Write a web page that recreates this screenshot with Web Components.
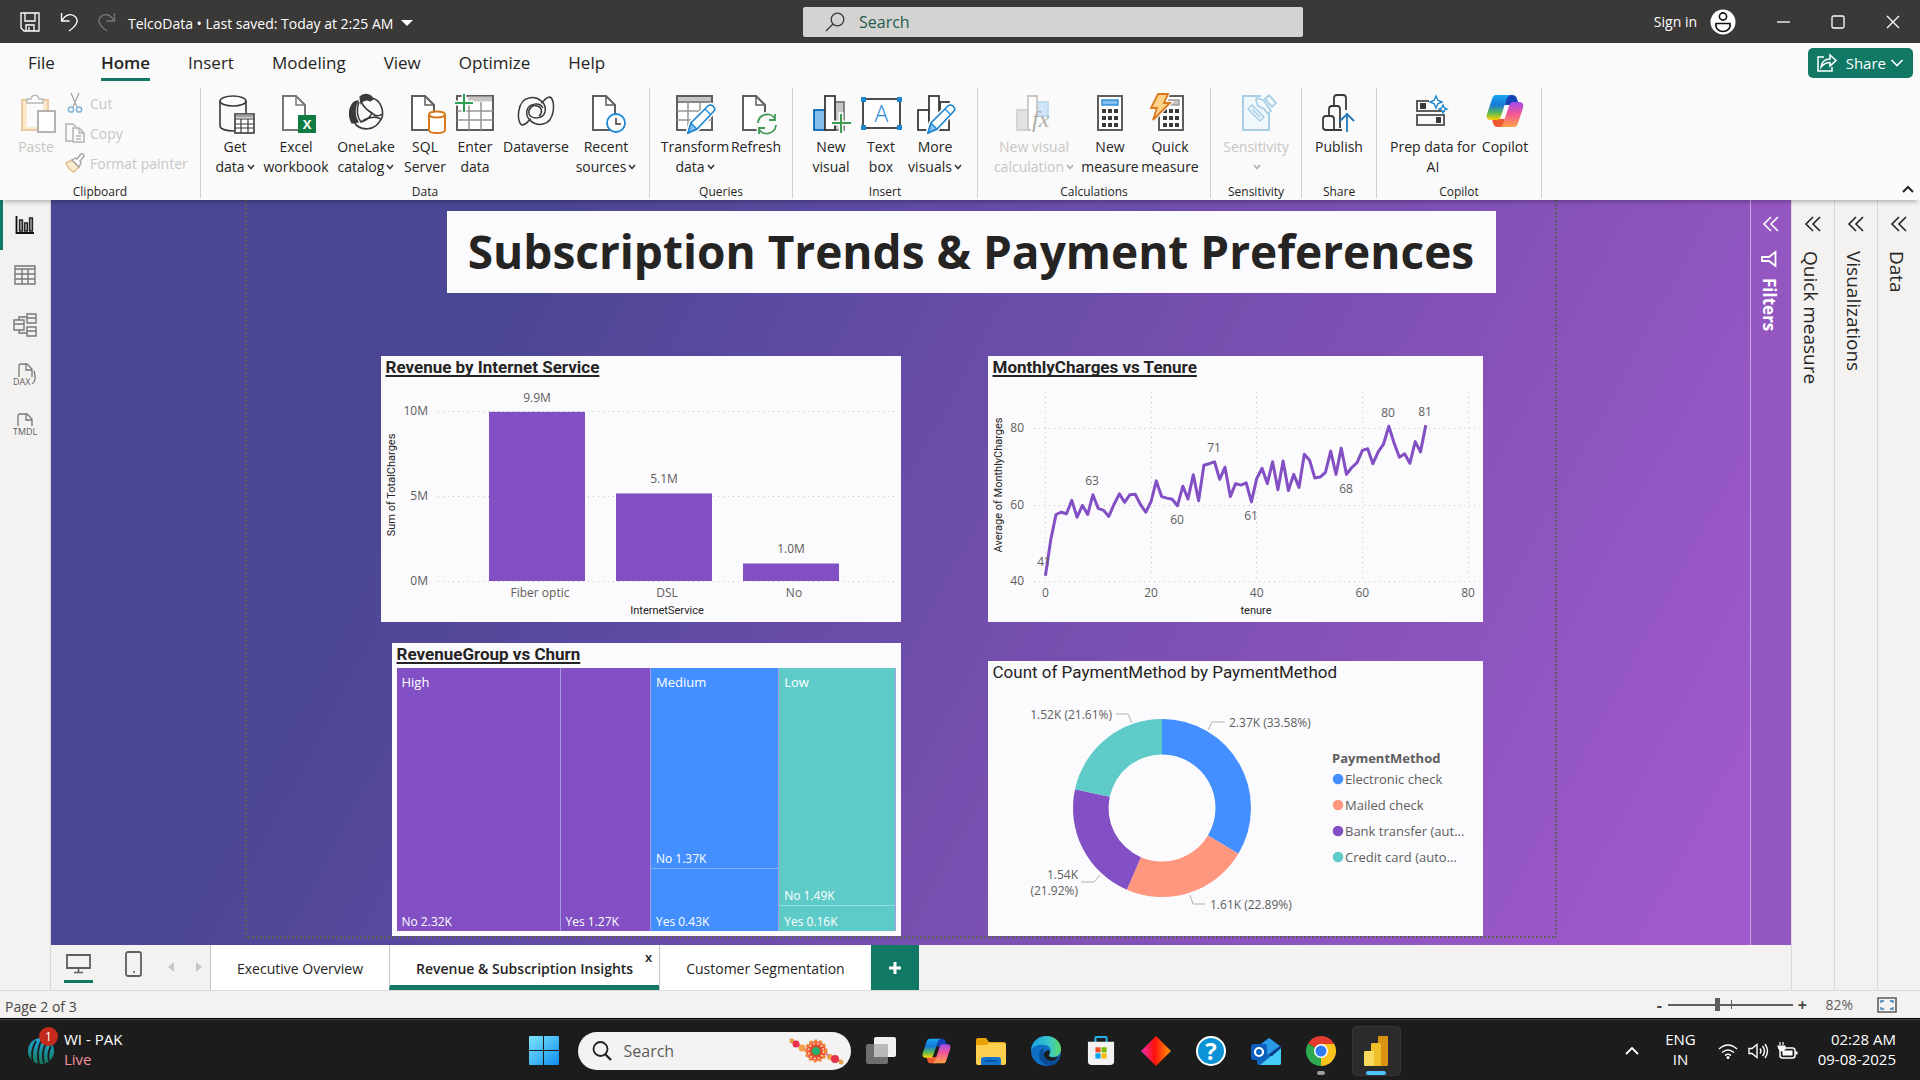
<!DOCTYPE html>
<html lang="en">
<head>
<meta charset="utf-8">
<title>TelcoData - Power BI Desktop</title>
<style>
  html, body { margin: 0; height: 100%; }
  body { font-family: "Open Sans", sans-serif; color: #252423; background: #f3f2f1; }
</style>
</head>
<body>
<pbi-app></pbi-app>

<script>
/* ---------- icon set: name -> [width, height, markup] ---------- */
const K = '#3b3a39';
const doc = (c = '#605e5c') => `<path d="M8 2H21L30 11V36H8Z" fill="#fff" stroke="${c}" stroke-width="2"/><path d="M21 2v9h9" stroke="${c}" stroke-width="1.500"/>`;
const pencil = `<path d="M14 39l3-10L34 12q2-2 5 0q3 3 1 5L23 35Z" fill="#fff" stroke="#fafafa" stroke-width="5"/><path d="M14 39l3-10L34 12q2-2 5 0q3 3 1 5L23 35Z" fill="#fff" stroke="#1f86d1" stroke-width="1.600"/><path d="M14 39l3-10 6 6Z" fill="#83beec" stroke="#1f86d1" stroke-width="1.400"/><path d="M31 15l6 6" stroke="#1f86d1"/>`;
const copilot = `<defs>
 <linearGradient id="a" x1="0" y1="0" x2="0" y2="1"><stop offset="0" stop-color="#1aa5f0"/><stop offset=".4" stop-color="#1679d8"/><stop offset=".7" stop-color="#57b85a"/><stop offset="1" stop-color="#ffd200"/></linearGradient>
 <linearGradient id="b" x1="0" y1="1" x2="0" y2="0"><stop offset="0" stop-color="#a04be8"/><stop offset=".45" stop-color="#f0559a"/><stop offset="1" stop-color="#ffa243"/></linearGradient></defs>
 <g stroke="none"><path d="M20 1h6c3 0 4 1 5 4l2 6h-14z" fill="#1442b8"/><path d="M18 33h-6c-3 0-4-1-5-4l-1-4h13z" fill="#ef5a33"/>
 <path d="M10 1h14c-2 1-3 3-4 6l-5 15c-1 3-2 4-5 4H5c-4 0-5-3-4-6L6 5c1-3 2-4 4-4z" fill="url(#a)"/>
 <path d="M10 1h14c-2 1-3 3-4 6l-5 15c-1 3-2 4-5 4H5c-4 0-5-3-4-6L6 5c1-3 2-4 4-4z" fill="url(#b)" transform="rotate(180 19 17)"/></g>`;
const calc = x => `<rect x="${x}" y="2" width="24" height="34" fill="#fff" stroke="#605e5c" stroke-width="2"/>` +
  [0,1,2].map(r => [0,1,2].map(c => `<rect x="${x+4+c*6}" y="${15+r*7}" width="4" height="4" fill="${K}" stroke="none"/>`).join('')).join('');

const ICONS = {
 save: [20,20,`<path d="M1 1h18v18H4l-3-3z"/><path d="M5 1v8h10V1M6 19v-6h8v6M9 15v4"/>`],
 undo: [18,20,`<path d="M1.500 1v8h8M2 9C5 2 12 1 15.500 5S17 13 9 19"/>`],
 redo: [18,20,`<path d="M16.500 1v8h-8M16 9C13 2 6 1 2.500 5S1 13 9 19"/>`],
 tri: [12,7,`<path d="M0 0h12L6 6z" fill="currentColor" stroke="none"/>`],
 mag: [20,20,`<circle cx="12.500" cy="7.500" r="6.300"/><path d="M8 12l-7 7"/>`],
 user: [26,26,`<circle cx="13" cy="13" r="12.500" fill="#fff" stroke="none"/><circle cx="13" cy="7.500" r="3.600" stroke="#111" stroke-width="1.600"/><path d="M6 14.500h14c1 5-3 8-7 8s-8-3-7-8z" stroke="#111" stroke-width="1.600"/>`],
 min: [14,14,`<path d="M1 7h13"/>`],
 max: [14,14,`<rect x="1" y="1" width="12" height="12" rx="1.500"/>`],
 close: [14,14,`<path d="M1 1l12 12M13 1L1 13"/>`],
 share: [20,20,`<path d="M7 4H1v14h14v-4" stroke-width="1.500"/><path d="M4 14c1-6 5-8 9-8V2l6 5.500-6 5.500V9.500c-4 0-6 1-9 4.500z" stroke-width="1.500"/>`],
 chev: [14,8,`<path d="M1.500 1L7 6.500 12.500 1" stroke-width="1.600"/>`],
 up: [12,8,`<path d="M1 7l5-5 5 5" stroke-width="2"/>`],
 caret: [8,6,`<path d="M1 1l3 3.500L7 1" stroke-width="1.600"/>`],
 paste: [40,40,`<path d="M6 6h26v30H6z" fill="#fbeacb" stroke="#ecc9a0" stroke-width="2"/><path d="M11 8h16v25H11z" fill="#fbfbfb" stroke="none"/><path d="M11 9V5h4c1-5 7-5 8 0h4v4z" fill="#fff" stroke="#bdbbb9" stroke-width="1.500"/><path d="M22 17h17v21H22z" fill="#fff" stroke="#b5b3b1" stroke-width="2"/>`],
 cut: [20,20,`<path d="M6 0l6 14M14 0L8 14" stroke="#a8a6a4"/><circle cx="6" cy="16.500" r="2.600" stroke="#7fb5d8" stroke-width="1.500"/><circle cx="14" cy="16.500" r="2.600" stroke="#7fb5d8" stroke-width="1.500"/>`],
 copy: [20,20,`<path d="M8 18H1V1h7l3 3M8 5h6l5 5v9H8z" stroke="#b5b3b1" stroke-width="1.500"/><path d="M14 5v5h5M11 13h5M11 16h5" stroke="#b5b3b1"/>`],
 brush: [20,20,`<path d="M1 10l6-3 7 7-5 5c-3-1-6-4-8-9z" fill="#fbeacb" stroke="#e5bd92" stroke-width="1.500"/><path d="M7 7l3-2 2 1 4-5q3-1 3 2l-4 5 1 2-2 4z" fill="#fff" stroke="#a8a6a4" stroke-width="1.500"/>`],
 getdata: [42,40,`<path d="M6 7v25c0 3 6 5 14 5M32 7v12" stroke="${K}" stroke-width="1.600"/><ellipse cx="19" cy="7" rx="13" ry="5" fill="#fff" stroke="${K}" stroke-width="1.600"/><rect x="21" y="20" width="19" height="19" fill="#fff" stroke="${K}" stroke-width="1.600"/><path d="M22 22h17" stroke="#a19f9d" stroke-width="3"/><path d="M21 25h19M21 30h19M21 34h19M27 25v14M34 25v14" stroke="${K}" stroke-width="1.200"/>`],
 excel: [42,40,doc('#797775')+`<rect x="23" y="21" width="18" height="18" fill="#107c41" stroke="none"/><text x="32" y="35" font-size="13" font-weight="700" text-anchor="middle" fill="#fff" stroke="none">X</text>`],
 onelake: [36,38,`<path d="M12 3c4-4 11-3 13 2l-3 2c-3-2-7-1-9 2z" fill="${K}" stroke="${K}"/><path d="M10 7C2 8-1 20 4 29l6-1C6 22 6 13 10 7z" fill="${K}" stroke="${K}"/><path d="M24 4c9 2 13 14 9 22M11 8c-3 7-2 15 2 20 5-1 9-5 11-9C20 17 16 13 13 8M24 19c3 4 8 3 10 1M6 28c6 10 22 9 27-3-5-3-14-2-20 3" stroke="${K}" stroke-width="1.600"/>`],
 sql: [42,40,doc()+`<path d="M25 21v15c0 2 4 3 8 3s8-1 8-3V21" fill="#fff" stroke="#d8791d" stroke-width="2"/><ellipse cx="33" cy="20.500" rx="8" ry="3" fill="#fff" stroke="#d8791d" stroke-width="2"/>`],
 enter: [42,40,`<rect x="3" y="2" width="36" height="34" fill="#fff" stroke="#605e5c" stroke-width="2"/><path d="M14 5h24" stroke="#c8c6c4" stroke-width="5"/><path d="M3 17h36M3 26h36M15 8v28M27 8v28" stroke="#979593" stroke-width="1.500"/><path d="M10-2v22M0 9h20" stroke="#fafafa" stroke-width="5"/><path d="M10 0v18M1 9h18" stroke="#2fa04e" stroke-width="2"/>`],
 dataverse: [38,34,`<path d="M5 31C-1 28 0 6 12 4c9-2 18 5 16 14-2 7-13 8-16 2-1-5 3-10 8-8 5 1 6 7 2 10M33 3c6 3 5 25-7 27C17 32 8 25 10 16c2-7 13-8 16-2M5 31c5 0 6-5 9-6M33 3c-5 0-6 5-9 6" stroke="${K}" stroke-width="1.500"/>`],
 recent: [42,40,doc()+`<circle cx="31" cy="29" r="9" fill="#fff" stroke="#1f86d1" stroke-width="1.800"/><path d="M31 24v6h5" stroke="${K}" stroke-width="1.500"/>`],
 transform: [42,40,`<path d="M3 2h35v34H3z" fill="#fff" stroke="#605e5c" stroke-width="2"/><path d="M4 5h33" stroke="#c8c6c4" stroke-width="4"/><path d="M3 8h35" stroke="#605e5c"/><path d="M3 17h35M3 26h35M14 8v28M26 8v28" stroke="#979593" stroke-width="1.500"/>`+pencil],
 refresh: [42,40,doc()+`<circle cx="32" cy="30" r="12" fill="#fafafa" stroke="none"/><path d="M23 29c1-10 14-11 17-4M40 20v6h-6M41 31c-1 10-14 11-17 4M24 40v-6h6" stroke="#3f9b56" stroke-width="1.800"/>`],
 newvisual: [42,40,`<rect x="25" y="8" width="9" height="28" fill="#c8c6c4" stroke="#797775" stroke-width="1.800"/><rect x="4" y="16" width="11" height="20" fill="#83beec" stroke="#1267b0" stroke-width="1.800"/><rect x="15" y="2" width="10" height="34" fill="#fff" stroke="${K}" stroke-width="1.800"/><path d="M31 18v22M21 29h20" stroke="#fafafa" stroke-width="5"/><path d="M31 20v19M22 29h19" stroke="#3f9b56" stroke-width="2"/>`],
 textbox: [42,40,`<rect x="3" y="5" width="37" height="29" fill="#fff" stroke="${K}" stroke-width="1.800"/><path d="M1 3h5v5H1zM37 3h5v5h-5zM1 31h5v5H1zM37 31h5v5h-5z" fill="#1f86d1" stroke="none"/><text x="21.500" y="28" font-size="23" text-anchor="middle" fill="#1f86d1" stroke="none" font-weight="300">A</text>`],
 morevisual: [42,40,`<rect x="26" y="8" width="9" height="28" fill="#fff" stroke="${K}" stroke-width="1.800"/><rect x="4" y="16" width="11" height="20" fill="#fff" stroke="${K}" stroke-width="1.800"/><rect x="15" y="2" width="10" height="34" fill="#fff" stroke="${K}" stroke-width="1.800"/>`+pencil],
 visualcalc: [42,40,`<rect x="23" y="8" width="12" height="14" fill="#cfe4f6" stroke="#b9d9f0" stroke-width="1.800"/><rect x="4" y="16" width="11" height="20" fill="#e3e1df" stroke="#d2d0ce" stroke-width="1.800"/><path d="M15 36V2h9v18L18 36z" fill="#fff" stroke="none"/><path d="M24 18V2H15v34h3" stroke="#c8c6c4" stroke-width="1.800"/><text x="19" y="33" font-size="24" font-style="italic" fill="#b0aeac" stroke="none" font-family="Liberation Serif">fx</text>`],
 measure: [42,40,calc(9)+`<rect x="13" y="6" width="16" height="5" fill="#83beec" stroke="#1f86d1"/>`],
 quick: [42,40,calc(10)+`<rect x="20" y="6" width="10" height="5" fill="#c8c6c4" stroke="#979593"/><path d="M9 0h10l-4 9h6L4 26l4-12H2z" fill="#fdd28a" stroke="#fafafa" stroke-width="4"/><path d="M9 0h10l-4 9h6L4 26l4-12H2z" fill="#fdd28a" stroke="#d8791d" stroke-width="1.800"/>`],
 sensitivity: [42,40,`<path d="M26 2H8v34h26V20" fill="#f1f8fc" stroke="#a9cfe6" stroke-width="2"/><path d="M13 15l4-4 12 12-4 4zM17 15l8 8" stroke="#a9cfe6" stroke-width="1.500"/><path d="M22 4l6 2 4 5 4 6-3 3-4-5-6-3-2-6zM30 5l4-4 7 8-4 4z" fill="#f1f8fc" stroke="#a9cfe6" stroke-width="1.800"/>`],
 publish: [42,40,`<path d="M28 16V4q0-3-3-3h-6q-3 0-3 3v8M22 34V15q0-3-3-3h-5q-3 0-3 3v7M16 36V25q0-3-3-3H8q-3 0-3 3v8q0 3 3 3h16" stroke="${K}" stroke-width="1.800"/><path d="M29 38V19M22 27l7-7 7 7" stroke="#1f76b8" stroke-width="1.800"/>`],
 prep: [42,40,`<path d="M17 7H5v10h27v-3" stroke="#605e5c" stroke-width="2"/><rect x="5" y="21" width="27" height="10" stroke="#605e5c" stroke-width="2"/><path d="M8 9h6v6H8zM24 23h5v6h-5z" fill="${K}" stroke="none"/><path d="M24 2l1.800 4.200L30 8l-4.200 1.800L24 14l-1.800-4.200L18 8l4.200-1.800zM31 11l1.200 2.800L35 15l-2.800 1.200L31 19l-1.200-2.800L27 15l2.800-1.200z" fill="#fff" stroke="#1f86d1" stroke-width="1.400"/>`],
 copilot: [38,34,copilot],
 report: [20,20,`<path d="M1.500 1v17H19" stroke="#111" stroke-width="1.800"/><path d="M4.500 5h3v11h-3zM9.500 8h3v8h-3zM14.500 3h3v13h-3z" fill="#979593" stroke="#252423" stroke-width="1.300"/>`],
 table: [22,20,`<path d="M1 1h20v18H1zM1 4h20M1 9h20M1 14h20M8 4v15M14 4v15" stroke="#797775" stroke-width="1.400"/>`],
 model: [24,24,`<path d="M1 7h10v10H1zM14 1h9v9h-9zM14 14h9v9h-9zM1 11h10M14 5h9M14 18h9M6 7V4h8M6 17v3h8" stroke="#797775" stroke-width="1.400"/>`],
 dax: [24,24,`<path d="M6 14V3q0-2 2-2h6l5 5v8M13 1v6h6M21 8q3 10-2 13" stroke="#797775" stroke-width="1.300"/><text x="0" y="22" font-size="9" fill="#605e5c" stroke="none">DAX</text>`],
 tmdl: [24,24,`<path d="M5 13V3q0-2 2-2h7l5 5v7M13 1v6h6" stroke="#797775" stroke-width="1.300"/><text x="0" y="22" font-size="9" fill="#605e5c" stroke="none">TMDL</text>`],
 collapse: [16,16,`<path d="M8 1L1 8l7 7M15 1L8 8l7 7" stroke-width="1.600"/>`],
 funnel: [16,16,`<path d="M14.500 1v14L8 10H1V6h7z" stroke-width="1.800"/>`],
 desktop: [25,20,`<path d="M1 1h23v13H1z" stroke="#605e5c" stroke-width="1.800"/><path d="M12.500 14v4M8 18.500h9" stroke="#605e5c" stroke-width="1.600"/>`],
 phone: [17,26,`<rect x="1" y="1" width="15" height="24" rx="2" stroke="#605e5c" stroke-width="1.800"/><path d="M8 21h2" stroke="#605e5c" stroke-width="1.500"/>`],
 left: [6,10,`<path d="M6 0v10L0 5z" fill="#c8c6c4" stroke="none"/>`],
 right: [6,10,`<path d="M0 0v10l6-5z" fill="#c8c6c4" stroke="none"/>`],
 plus: [14,14,`<path d="M7 1v12M1 7h12" stroke-width="3"/>`],
 fit: [20,16,`<path d="M1 1h18v14H1z" stroke="#605e5c" stroke-width="1.600"/><path d="M4 6V4h3M13 4h3v2M16 10v2h-3M7 12H4v-2" stroke="#2d7fb8" stroke-width="1.300"/>`],
 cricket: [30,36,`<defs><linearGradient id="c" x1="0" y1="0" x2="0" y2="1"><stop offset="0" stop-color="#1ba8dc"/><stop offset="1" stop-color="#17785c"/></linearGradient></defs><circle cx="14" cy="20" r="13" fill="url(#c)" stroke="none"/><path d="M9 10q-6 10-3 21M14 10q-5 12-2 23M19 12q-5 10-2 20M24 15q-4 8-2 15" stroke="#1c1c1c" stroke-width="1.800"/>`],
 start: [30,30,`<defs><linearGradient id="w" x1="0" y1="0" x2="1" y2="1"><stop offset="0" stop-color="#7de6fb"/><stop offset="1" stop-color="#0f8df2"/></linearGradient></defs><path d="M0 1q0-1 1-1h13v14H0zM15 0h14q1 0 1 1v13H15zM0 15h14v14H1q-1 0-1-1zM15 15h15v13q0 1-1 1H15z" fill="url(#w)" stroke="none"/>`],
 mag2: [20,20,`<circle cx="8.500" cy="8" r="7" stroke-width="1.800"/><path d="M13 13l6 6" stroke-width="2.400"/>`],
 rakhi: [56,28,`<path d="M2 2L18 13M38 17l16 8" stroke="#b06bd0" stroke-width="2"/><g stroke="none"><circle cx="4" cy="4" r="2.500" fill="#e2a24a"/><circle cx="8" cy="7" r="3.500" fill="#e8324b"/><circle cx="14" cy="11" r="3.500" fill="#f2a24c"/><circle cx="42" cy="20" r="3" fill="#f2a24c"/><circle cx="47" cy="22" r="4" fill="#e8324b"/><circle cx="53" cy="25" r="2.500" fill="#e2a24a"/></g><circle cx="28" cy="14" r="10" fill="#ee4a3c" stroke="#f08a3a" stroke-width="3" stroke-dasharray="3 2"/><circle cx="28" cy="14" r="7.500" stroke="#fbdca0" stroke-width="1.600" stroke-dasharray="2 2"/><circle cx="28" cy="14" r="4.500" fill="#21b573" stroke="#b8571e"/>`],
 taskview: [30,30,`<rect x="0" y="8" width="22" height="20" rx="2" fill="#6e6e6e" stroke="none"/><rect x="8" y="1" width="22" height="20" rx="2" fill="#f0f0f0" stroke="none"/><path d="M8 8h14v13H8z" fill="#b9b9b9" stroke="none"/>`],
 explorer: [30,28,`<path d="M0 3q0-2 2-2h8l3 4h15q2 0 2 2v6H0z" fill="#e6a207" stroke="none"/><path d="M0 9q0-1 1-1h10l2-2h15q2 0 2 2v18q0 2-2 2H2q-2 0-2-2z" fill="#ffd04f" stroke="none"/><path d="M5 28v-5q0-3 3-3h14q3 0 3 3v5z" fill="#1273cf" stroke="none"/><path d="M9 24h12" stroke="#0a4a92" stroke-width="1.500"/>`],
 edge: [30,30,`<defs><linearGradient id="e" x1="0" y1=".3" x2="1" y2=".3"><stop offset="0" stop-color="#1b9de2"/><stop offset=".6" stop-color="#36c6c9"/><stop offset="1" stop-color="#5fd968"/></linearGradient></defs><circle cx="15" cy="15" r="15" fill="#0f6fc6" stroke="none"/><path d="M0 14C1 5 8 0 15 0c9 0 15 6 15 13 0 5-4 8-8 8-5 0-5-2-3-4 2-4-1-8-6-8C7 8 2 11 0 14z" fill="url(#e)" stroke="none"/><path d="M19 17q-3 4 3 4.500 4 0 6-1.500-2 4-6 5-7 1-9-4-1-4 2-6 4-2 4 2z" fill="#1c1c1c" stroke="none"/><path d="M13 12C6 14 6 26 17 29.800 26 30 29 23 29 21 22 28 10 25 13 12z" fill="#0b4d97" stroke="none"/>`],
 store: [30,32,`<path d="M9 7V2q0-1 1-1h10q1 0 1 1v5" stroke="#29aee6" stroke-width="2.200"/><path d="M1 6h28v21q0 4-4 4H5q-4 0-4-4z" fill="#f2f2f2" stroke="none"/><path d="M9 12h5.500v5.500H9z" fill="#f25022" stroke="none"/><path d="M15.500 12H21v5.500h-5.500z" fill="#7fba00" stroke="none"/><path d="M9 18.500h5.500V24H9z" fill="#00a4ef" stroke="none"/><path d="M15.500 18.500H21V24h-5.500z" fill="#ffb900" stroke="none"/>`],
 diamond: [30,30,`<defs><linearGradient id="d"><stop offset="0" stop-color="#f02fb0"/><stop offset=".45" stop-color="#ff1010"/><stop offset="1" stop-color="#ff9a00"/></linearGradient></defs><path d="M15 0l15 15-15 15L0 15z" fill="url(#d)" stroke="none"/>`],
 help: [30,30,`<circle cx="15" cy="15" r="14" fill="#0b93d6" stroke="#fff" stroke-width="2"/><text x="15" y="24" font-size="24" font-weight="700" text-anchor="middle" fill="#fff" stroke="none">?</text>`],
 outlook: [30,28,`<path d="M6 10L18 1l12 9v16q0 2-2 2H8q-2 0-2-2z" fill="#1065c0" stroke="none"/><path d="M10 7l8-6 11 8-12 9z" fill="#2a9be8" stroke="none"/><path d="M30 11v15q0 2-2 2H9z" fill="#45cbfa" stroke="none"/><path d="M17 18L29 9l1 2-9 8z" fill="#0b3d86" stroke="none"/><rect x="0" y="7" width="16" height="16" rx="2" fill="#0d5fbd" stroke="none"/><circle cx="8" cy="15" r="4" stroke="#fff" stroke-width="2.200"/>`],
 chrome: [30,30,`<path d="M15 15L2 7.500A15 15 0 0 1 28 7.500z" fill="#e33b2e" stroke="none"/><path d="M15 15L28 7.500A15 15 0 0 1 15 30z" fill="#fcc31e" stroke="none"/><path d="M15 15V30A15 15 0 0 1 2 7.500z" fill="#2da94f" stroke="none"/><path d="M15 8h13.300L22 19 15 30l6-11z" fill="#fcc31e" stroke="none"/><circle cx="15" cy="15" r="7" fill="#fff" stroke="none"/><circle cx="15" cy="15" r="5.500" fill="#2f7cf0" stroke="none"/>`],
 pbi: [24,30,`<rect x="14" y="0" width="10" height="30" rx="1" fill="#d9930f" stroke="none"/><rect x="7" y="7" width="10" height="23" rx="1" fill="#edbf2b" stroke="none"/><rect x="0" y="15" width="10" height="15" rx="1" fill="#f7d95e" stroke="none"/>`],
 trayup: [14,9,`<path d="M1 8l6-6 6 6" stroke-width="1.800"/>`],
 wifi: [20,16,`<path d="M1 6q9-8 18 0M4 9.500q6-5 12 0M7 12.500q3-2.500 6 0" stroke-width="1.600"/><circle cx="10" cy="14.500" r="1.500" fill="currentColor" stroke="none"/>`],
 sound: [20,16,`<path d="M1 5.500h3L9 1.500v13l-5-4H1zM12 5.500q2 2.500 0 5M14.500 3q4 5 0 10M17 1q5 7 0 14" stroke-width="1.400"/>`],
 battery: [21,18,`<rect x="2" y="6" width="15" height="10" rx="2.500" stroke-width="1.500"/><rect x="4.500" y="8.500" width="10" height="5" fill="currentColor" stroke="none"/><path d="M18.500 9.500v3" stroke-width="2"/><path d="M2 0v3M5 0v3M0 4h7v3q-3 4-6 0z" fill="currentColor" stroke-width="1.200"/>`]
};

/* Registers a custom element whose shadow root is cloned from a template. */
function define(tag, html, setup) {
  const t = document.createElement('template');
  t.innerHTML = html;
  customElements.define(tag, class extends HTMLElement {
    constructor() { super(); this.attachShadow({ mode: 'open' }).append(t.content.cloneNode(true)); }
    connectedCallback() { if (setup && !this.ready) { this.ready = true; setup.call(this, this.shadowRoot); } }
  });
}
const reset = `:host,*{box-sizing:border-box} button,input{font:inherit;color:inherit;background:none;border:0;margin:0;padding:0} button{display:flex;align-items:center;justify-content:center}`;

define('x-icon', `<style>:host{display:inline-flex;flex:none} svg{display:block;overflow:visible;font-family:"Open Sans",sans-serif}</style>`, function (root) {
  const [w, h, body] = ICONS[this.getAttribute('name')];
  const size = this.getAttribute('size') || w;
  const box = document.createElement('div');
  box.innerHTML = `<svg width="${size}" height="${Math.round(h * size / w)}" viewBox="0 0 ${w} ${h}" fill="none" stroke="currentColor" stroke-width="1.300" aria-hidden="true">${body}</svg>`;
  root.append(box);
});

/* ---------- title bar ---------- */
define('title-bar', `<style>${reset}
 :host{display:grid;grid-template-columns:803fr 500px 617fr;align-items:center;height:43px;background:#3b3937;color:#fff;font-size:14px}
 .l,.r{display:flex;align-items:center}
 .l{padding-left:20px;gap:20px} .off{color:#7a7876}
 .name{gap:8px;margin-left:-8px;padding-top:4px}
 label{display:flex;align-items:center;gap:14px;height:30px;padding-left:22px;background:#d4d3d1;border-radius:2px;color:#3b3a39}
 input{flex:1;font-size:16px;outline:0} input::placeholder{color:#1f5c50;opacity:1}
 .r{justify-content:flex-end;padding-right:20px;gap:41px} .sign{gap:13px;margin-right:-1px}
</style>
<div class="l"><button aria-label="Save"><x-icon name="save"></x-icon></button><button aria-label="Undo"><x-icon name="undo"></x-icon></button><button class="off" aria-label="Redo"><x-icon name="redo"></x-icon></button>
<button class="name">TelcoData • Last saved: Today at 2:25 AM<x-icon name="tri"></x-icon></button></div>
<label aria-label="Search"><x-icon name="mag"></x-icon><input type="text" placeholder="Search"></label>
<div class="r"><button class="sign">Sign in<x-icon name="user"></x-icon></button><button aria-label="Minimize"><x-icon name="min"></x-icon></button><button aria-label="Maximize"><x-icon name="max"></x-icon></button><button aria-label="Close"><x-icon name="close"></x-icon></button></div>`);

/* ---------- ribbon ---------- */
define('ribbon-tabs', `<style>${reset}
 :host{display:flex;align-items:flex-start;height:40px;background:#fafafa;padding:5px 7px 0 28px}
 nav{display:flex;gap:38px;font-size:17px}
 nav button{height:33px;line-height:30px;border-bottom:3px solid transparent}
 nav button:first-child{margin-right:8px}
 nav .on{font-weight:600;border-color:#117865}
 .share{margin-left:auto;height:30px;padding:0 9px;gap:9px;border-radius:5px;background:#117865;color:#fff;font-size:15px}
 .share x-icon:last-child{margin-left:-5px}
</style>
<nav><button>File</button><button class="on">Home</button><button>Insert</button><button>Modeling</button><button>View</button><button>Optimize</button><button>Help</button></nav>
<button class="share"><x-icon name="share"></x-icon>Share<x-icon name="chev"></x-icon></button>`);

define('ribbon-group', `<style>:host{display:flex;flex-direction:column;border-right:1px solid #d2d0ce;height:110px;box-sizing:border-box;padding:0 var(--pad,10px)}
 .items{display:flex;flex:1} .cap{font-size:12px;line-height:12px;text-align:center}</style>
<div class="items"><slot></slot></div><div class="cap"></div>`, function (root) { root.querySelector('.cap').textContent = this.getAttribute('label'); });

const WIDTHS = { xs: 48, s: 52, m: 60, l: 70, xl: 92 };
define('ribbon-button', `<style>${reset}
 :host{display:block;font-size:14px} :host([off]){color:#c8c6c4}
 button{width:100%;flex-direction:column;justify-content:flex-start;padding-top:6px}
 .pic{height:43px;display:flex;align-items:flex-start;justify-content:center}
 .txt{line-height:20px;white-space:nowrap;text-align:center} .c{color:#3b3a39;vertical-align:2px;margin-left:2px} :host([off]) .c{color:#b0aeac}
</style><button><span class="pic"></span><span class="txt"><slot></slot></span></button>`, function (root) {
  this.style.width = WIDTHS[this.getAttribute('size')] + 'px';
  root.querySelector('.pic').innerHTML = `<x-icon name="${this.getAttribute('icon')}"></x-icon>`;
  if (this.hasAttribute('caret')) root.querySelector('.txt').insertAdjacentHTML('beforeend', '<x-icon class="c" name="caret"></x-icon>');
  if (this.hasAttribute('off')) root.querySelector('button').disabled = true;
});

define('clip-list', `<style>${reset}
 :host{display:flex;flex-direction:column;gap:10px;padding:5px 0 0 3px;font-size:14px;color:#c8c6c4} button{justify-content:flex-start;gap:5px;height:20px;white-space:nowrap}
</style><button disabled><x-icon name="cut"></x-icon>Cut</button><button disabled><x-icon name="copy"></x-icon>Copy</button><button disabled><x-icon name="brush"></x-icon>Format painter</button>`);

define('ribbon-bar', `<style>${reset}
 :host{display:flex;height:117px;padding-top:5px;background:#fafafa;box-shadow:0 5px 4px -3px rgba(0,0,0,.25);position:relative;z-index:2}
 .fold{margin-left:auto;align-self:flex-end;padding:0 6px 7px 0} .clip{width:201px}
</style>
<ribbon-group class="clip" label="Clipboard"><ribbon-button icon="paste" size="s" off>Paste</ribbon-button><clip-list></clip-list></ribbon-group>
<ribbon-group label="Data" style="--pad:8px">
 <ribbon-button icon="getdata" size="s" caret>Get<br>data</ribbon-button><ribbon-button icon="excel" size="l">Excel<br>workbook</ribbon-button><ribbon-button icon="onelake" size="l" caret>OneLake<br>catalog</ribbon-button><ribbon-button icon="sql" size="xs">SQL<br>Server</ribbon-button><ribbon-button icon="enter" size="s">Enter<br>data</ribbon-button><ribbon-button icon="dataverse" size="l">Dataverse</ribbon-button><ribbon-button icon="recent" size="l" caret>Recent<br>sources</ribbon-button></ribbon-group>
<ribbon-group label="Queries"><ribbon-button icon="transform" size="l" caret>Transform<br>data</ribbon-button><ribbon-button icon="refresh" size="s">Refresh</ribbon-button></ribbon-group>
<ribbon-group label="Insert" style="--pad:12px"><ribbon-button icon="newvisual" size="s">New<br>visual</ribbon-button><ribbon-button icon="textbox" size="xs">Text<br>box</ribbon-button><ribbon-button icon="morevisual" size="m" caret>More<br>visuals</ribbon-button></ribbon-group>
<ribbon-group label="Calculations"><ribbon-button icon="visualcalc" size="xl" caret off>New visual<br>calculation</ribbon-button><ribbon-button icon="measure" size="m">New<br>measure</ribbon-button><ribbon-button icon="quick" size="m">Quick<br>measure</ribbon-button></ribbon-group>
<ribbon-group label="Sensitivity"><ribbon-button icon="sensitivity" size="l" caret off>Sensitivity<br></ribbon-button></ribbon-group>
<ribbon-group label="Share" style="--pad:7px"><ribbon-button icon="publish" size="m">Publish</ribbon-button></ribbon-group>
<ribbon-group label="Copilot"><ribbon-button icon="prep" size="xl">Prep data for<br>AI</ribbon-button><ribbon-button icon="copilot" size="s">Copilot</ribbon-button></ribbon-group>
<button class="fold" aria-label="Collapse ribbon"><x-icon name="up"></x-icon></button>`);

/* ---------- left rail ---------- */
define('view-rail', `<style>${reset}
 :host{display:flex;flex-direction:column;width:51px;background:#f3f2f1;border-right:1px solid #d8d6d4}
 button{height:50px;border-left:3px solid transparent;padding-right:3px} .on{border-color:#117865}
</style><button class="on" aria-label="Report view"><x-icon name="report"></x-icon></button><button aria-label="Table view"><x-icon name="table"></x-icon></button><button aria-label="Model view"><x-icon name="model"></x-icon></button><button aria-label="DAX query view"><x-icon name="dax"></x-icon></button><button aria-label="TMDL view"><x-icon name="tmdl"></x-icon></button>`);

/* ---------- visuals ---------- */
define('visual-card', `<style>
 :host{display:block;background:#fbfafd}
 h2{margin:0;padding:0 5px;height:25px;font:400 17px/22px Roboto,sans-serif;color:#252423;white-space:nowrap}
 :host([strong]) h2{font-weight:700;text-decoration:underline;text-underline-offset:2px;text-decoration-thickness:2px;text-decoration-skip-ink:none}
</style><h2></h2><slot></slot>`, function (root) { root.querySelector('h2').textContent = this.getAttribute('heading'); });

const chartCss = `:host{display:block} svg{display:block;width:100%;height:auto;overflow:visible} text{font-family:"Open Sans",sans-serif;font-size:12px;fill:#605e5c} .t{font-family:Roboto,sans-serif;font-size:11px;fill:#252423} .g{stroke:#c8c6c4;stroke-width:1;stroke-dasharray:1 4} .m{text-anchor:middle} .e{text-anchor:end}`;
const txt = (x, y, s, c = 'm') => `<text x="${x}" y="${y}" class="${c}">${s}</text>`;

define('bar-chart', `<style>${chartCss}</style><div></div>`, function (root) {
  const y = v => 225 - v * 17;
  let s = [0, 5, 10].map(v => `<path class="g" d="M57 ${y(v) + .5}H513"/>` + txt(47, y(v) + 4, v + 'M', 'e')).join('');
  s += [['Fiber optic', 9.95, '9.9M'], ['DSL', 5.15, '5.1M'], ['No', 1.03, '1.0M']].map(([n, v, l], i) =>
    `<rect x="${108 + 127 * i}" y="${y(v)}" width="96" height="${225 - y(v)}" fill="#8250c4"/>` + txt(156 + 127 * i, y(v) - 10, l) + txt(159 + 127 * i, 241, n)).join('');
  root.querySelector('div').innerHTML = `<svg viewBox="0 25 520 241">${s}${txt(286, 258, 'InternetService', 'm t')}<text class="m t" transform="translate(14 129) rotate(-90)">Sum of TotalCharges</text></svg>`;
});

define('line-chart', `<style>${chartCss}</style><div></div>`, function (root) {
  const d = [41.4,50.7,57.4,58,57.6,61.1,56.7,59.8,57.4,62.6,59,58.5,56.9,60.1,62.8,60.6,62.6,62.7,60,58,60.8,66.2,62.1,61.7,61.4,59.7,64.8,61.5,67.8,61,70.3,70.7,71.2,66.6,69.8,62.1,65.5,65.1,65.7,60.7,66.8,69.5,65.5,71.2,63.9,71.4,63.7,67.9,64.5,73.2,71.6,67,67.2,68.4,74,67.9,74.8,67.9,69.7,71,74.2,74.6,70.7,73.8,75.8,80.5,76.1,72.4,73.3,70.8,76.5,73.8,80.8];
  const X = t => 57.4 + 5.283 * t, Y = v => 225 - (v - 40) * 3.82;
  let s = [40, 60, 80].map(v => `<path class="g" d="M46 ${Math.round(Y(v)) + .5}H487"/>` + txt(36, Math.round(Y(v)) + 4, v, 'e')).join('');
  s += [0, 20, 40, 60, 80].map(t => `<path class="g" d="M${Math.floor(X(t)) + .5} 36V225"/>` + txt(X(t), 241, t)).join('');
  s += `<polyline points="${d.map((v, t) => X(t).toFixed(1) + ',' + Y(v).toFixed(1)).join(' ')}" fill="none" stroke="#8250c4" stroke-width="3" stroke-linejoin="round"/>`;
  s += [[56,210,41],[104,129,63],[226,96,71],[189,168,60],[263,164,61],[358,137,68],[400,61,80],[437,60,81]].map(a => txt(...a)).join('');
  root.querySelector('div').innerHTML = `<svg viewBox="0 25 495 241">${s}${txt(268, 258, 'tenure', 'm t')}<text class="m t" transform="translate(14 129) rotate(-90)">Average of MonthlyCharges</text></svg>`;
});

define('tree-map', `<style>
 :host{display:grid;grid-template-columns:164fr 90fr 128fr 117fr;height:263px;margin:0 5px;color:#fff;font-size:12px;gap:1px;background:#a79be0}
 .col{display:flex;flex-direction:column;gap:1px} .cu{background:#80b4ff} .cg{background:#97dfdd}
 .cell{display:flex;flex-direction:column;justify-content:space-between;flex:1;padding:5px 5px 1px;line-height:16px;white-space:nowrap}
 b{font-weight:400;font-size:13px;line-height:18px} span{margin-top:auto} .p{background:#8250c4} .u{background:#448fff} .g{background:#5ecbc8} .s,.xs{flex:none;box-sizing:border-box} .s{height:62px} .xs{height:25px}
</style>
<div class="col"><div class="cell p"><b>High</b><span>No 2.32K</span></div></div><div class="col"><div class="cell p"><span>Yes 1.27K</span></div></div>
<div class="col cu"><div class="cell u"><b>Medium</b><span>No 1.37K</span></div><div class="cell u s"><span>Yes 0.43K</span></div></div>
<div class="col cg"><div class="cell g"><b>Low</b><span>No 1.49K</span></div><div class="cell g xs"><span>Yes 0.16K</span></div></div>`);

define('donut-chart', `<style>${chartCss} .k{font-size:13px} .kb{font-size:13px;font-weight:700} .l{fill:none;stroke:#b3b0ad}</style><div></div>`, function (root) {
  const cx = 174, cy = 147, R = 89, r = 53.5;
  const pt = (p, q) => `${(cx + q * Math.sin(p * 2 * Math.PI)).toFixed(2)} ${(cy - q * Math.cos(p * 2 * Math.PI)).toFixed(2)}`;
  let a = 0, s = '';
  for (const [v, c] of [[.3358, '#448fff'], [.2289, '#ff977e'], [.2192, '#8250c4'], [.2161, '#5ecbc8']]) {
    const b = a + v;
    s += `<path fill="${c}" d="M${pt(a, R)}A${R} ${R} 0 0 1 ${pt(b, R)}L${pt(b, r)}A${r} ${r} 0 0 0 ${pt(a, r)}Z"/>`;
    a = b;
  }
  s += `<path class="l" d="M220 69L224 61H237M202 234L205 243H217M112 214L106 221H93M144 62L140 53H128"/>`;
  s += txt(241, 66, '2.37K (33.58%)', '') + txt(222, 248, '1.61K (22.89%)', '') + txt(90, 218, '1.54K', 'e') + txt(90, 234, '(21.92%)', 'e') + txt(124, 58, '1.52K (21.61%)', 'e');
  s += txt(344, 102, 'PaymentMethod', 'kb');
  s += [['Electronic check', '#448fff'], ['Mailed check', '#ff977e'], ['Bank transfer (aut...', '#8250c4'], ['Credit card (auto...', '#5ecbc8']].map(([n, c], i) =>
    `<circle cx="350" cy="${118 + 26 * i}" r="5.300" fill="${c}"/>` + txt(357, 123 + 26 * i, n, 'k')).join('');
  root.querySelector('div').innerHTML = `<svg viewBox="0 25 495 250">${s}</svg>`;
});

define('report-canvas', `<style>
 :host{display:flex;flex:1;justify-content:center;overflow:hidden;background:linear-gradient(118deg,#4b4695 24%,#6b4da9 50%,#8552b8 72%,#a05acd 97%)}
 .page{width:1312px;max-width:100%;box-sizing:border-box;display:flex;flex-direction:column;border:2px dotted #605e5c;border-top:0;margin-bottom:7px;padding-top:11px}
 h1{margin:0 59px 63px 200px;height:82px;background:#fbfafd;font-size:46px;line-height:80px;font-weight:700;text-align:center;white-space:nowrap;color:#252423}
 .cards{flex:1;display:grid;grid-template-columns:134fr 520fr 87fr 495fr 72fr}
 .col{display:flex;flex-direction:column;justify-content:space-between} .a{grid-column:2} .b{grid-column:4} .in{margin-left:11px} .tree{padding-bottom:5px}
</style>
<div class="page"><h1>Subscription Trends &amp; Payment Preferences</h1>
<div class="cards"><div class="col a"><visual-card strong heading="Revenue by Internet Service"><bar-chart></bar-chart></visual-card><visual-card class="in tree" strong heading="RevenueGroup vs Churn"><tree-map></tree-map></visual-card></div>
<div class="col b"><visual-card strong heading="MonthlyCharges vs Tenure"><line-chart></line-chart></visual-card><visual-card heading="Count of PaymentMethod by PaymentMethod"><donut-chart></donut-chart></visual-card></div></div></div>`);

/* ---------- collapsed panes ---------- */
define('side-pane', `<style>${reset}
 :host{display:block;width:43px;border-left:1px solid #dcdad8;font-size:19px;font-weight:500}
 button{width:100%;flex-direction:column;padding-top:16px;gap:19px} .n{display:flex;align-items:center;gap:11px;writing-mode:vertical-rl;line-height:24px;padding-right:4px}
 :host([filters]){width:41px;background:#9457c2;color:#fff;font-weight:700;font-size:17px;border-color:#c9a6e2}
</style><button><x-icon name="collapse"></x-icon><span class="n"><slot></slot></span></button>`, function (root) {
  if (this.hasAttribute('filters')) root.querySelector('.n').insertAdjacentHTML('afterbegin', '<x-icon name="funnel"></x-icon>');
});

/* ---------- page tabs, status bar ---------- */
define('page-tabs', `<style>${reset}
 :host{display:flex;height:45px;background:#f3f2f1;font-size:14px;padding-left:13px}
 .v{display:flex;align-items:flex-start} .d{padding:9px 2px 6px;border-bottom:3px solid #117865} .m{padding-top:6px;margin:0 26px 0 32px} .v .ar{padding-top:17px;margin-right:22px} .v .ar:last-child{margin-right:8px}
 .tab{display:flex;align-items:center;background:#fff;border-left:1px solid #c8c6c4;padding:2px 26px 0} .tab.on{font-weight:600;border-bottom:5px solid #117865;padding-top:7px;position:relative}
 .x{position:absolute;right:7px;top:3px;font-size:13px;line-height:18px} .add{width:48px;background:#117865;color:#fff}
</style><div class="v"><button class="d" aria-label="Desktop layout"><x-icon name="desktop"></x-icon></button><button class="m" aria-label="Mobile layout"><x-icon name="phone"></x-icon></button><button class="ar" aria-label="Previous"><x-icon name="left"></x-icon></button><button class="ar" aria-label="Next"><x-icon name="right"></x-icon></button></div>
<div class="tab"><button>Executive Overview</button></div><div class="tab on"><button>Revenue &amp; Subscription Insights</button><button class="x" aria-label="Delete page">x</button></div><div class="tab"><button>Customer Segmentation</button></div><button class="add" aria-label="New page"><x-icon name="plus"></x-icon></button>`);

define('status-bar', `<style>${reset}
 :host{display:flex;align-items:center;height:28px;background:#f3f2f1;border-top:1px solid #dcdad8;padding:4px 23px 0 5px;font-size:14px;color:#484644}
 .z{margin-left:auto;display:flex;align-items:center;margin-top:-4px} .z button{width:18px;font-weight:700;font-size:16px} .z button:last-child{width:20px}
 input{appearance:none;width:125px;height:14px;background:linear-gradient(#605e5c,#605e5c) 0 50%/100% 2px no-repeat,linear-gradient(#605e5c,#605e5c) 63px 50%/1px 9px no-repeat}
 input::-webkit-slider-thumb{appearance:none;width:5px;height:13px;background:#605e5c}
 output{margin:0 24px 0 14px;color:#605e5c}
</style><span>Page 2 of 3</span><div class="z"><button aria-label="Zoom out">-</button><input type="range" min="0" max="100" value="39" aria-label="Zoom"><button aria-label="Zoom in">+</button><output>82%</output><button aria-label="Fit to page"><x-icon name="fit"></x-icon></button></div>`);

/* ---------- OS taskbar ---------- */
define('task-bar', `<style>${reset}
 :host{display:grid;grid-template-columns:1fr auto 1fr;align-items:center;height:62px;padding-top:2px;background:#1c1c1c;border-top:1px solid #000;box-shadow:inset 0 1px #444;color:#fff;font-size:15px;line-height:20px}
 .w{padding:0 0 4px 27px;gap:7px;justify-self:start;text-align:left} .w i{font-style:normal;color:#f2919c} .pic{position:relative;display:flex} .badge{position:absolute;left:12px;top:-4px;width:19px;height:19px;border-radius:50%;background:#c42b1c;font-size:12px;line-height:19px;text-align:center}
 .c{display:flex;align-items:center;gap:6px} .c button{width:49px;height:50px;position:relative;border-radius:5px}
 label{display:flex;align-items:center;gap:12px;width:273px;height:38px;margin:0 0 0 3px;padding:0 7px 0 14px;border-radius:19px;background:#f3f3f3;color:#222} input{flex:1;min-width:0;font-size:16px;outline:0} input::placeholder{color:#5c5c5c;opacity:1}
 .c .on{background:#2b2b2b;box-shadow:inset 0 0 0 1px #353535} .on::after,.dot::after{content:"";position:absolute;bottom:1px;width:20px;height:4px;border-radius:2px;background:#4cc2ff} .dot::after{width:8px;background:#9a9a9a}
 .r{display:flex;align-items:center;justify-content:flex-end;padding-right:24px} .lang{margin:0 22px 0 26px;padding-bottom:4px;text-align:center} .net{gap:10px;margin-right:19px} .r .time{text-align:right;display:block;padding-bottom:4px}
</style>
<button class="w"><span class="pic"><x-icon name="cricket"></x-icon><span class="badge">1</span></span><span>WI - PAK<br><i>Live</i></span></button>
<div class="c"><button aria-label="Start"><x-icon name="start"></x-icon></button>
<label aria-label="Search"><x-icon name="mag2"></x-icon><input type="text" placeholder="Search"><x-icon name="rakhi"></x-icon></label>
<button aria-label="Task view"><x-icon name="taskview"></x-icon></button><button aria-label="Copilot"><x-icon name="copilot" size="29"></x-icon></button><button aria-label="File Explorer"><x-icon name="explorer"></x-icon></button><button aria-label="Edge"><x-icon name="edge"></x-icon></button><button aria-label="Store"><x-icon name="store" size="28"></x-icon></button><button aria-label="Power Automate"><x-icon name="diamond"></x-icon></button><button aria-label="Help"><x-icon name="help"></x-icon></button><button aria-label="Outlook"><x-icon name="outlook"></x-icon></button><button class="dot" aria-label="Chrome"><x-icon name="chrome"></x-icon></button><button class="on" aria-label="Power BI"><x-icon name="pbi"></x-icon></button></div>
<div class="r"><button aria-label="Hidden icons"><x-icon name="trayup"></x-icon></button><button class="lang">ENG<br>IN</button><button class="net" aria-label="Network, volume, battery"><x-icon name="wifi"></x-icon><x-icon name="sound"></x-icon><x-icon name="battery"></x-icon></button><button class="time">02:28 AM<br>09-08-2025</button></div>`);

define('pbi-app', `<style>
 :host{display:flex;flex-direction:column;min-height:100vh} main{flex:1;display:flex}
 .work{flex:1;min-width:0;display:flex;flex-direction:column} .stage{flex:1;display:flex}
</style>
<title-bar></title-bar><ribbon-tabs></ribbon-tabs><ribbon-bar></ribbon-bar>
<main><view-rail></view-rail><div class="work"><div class="stage"><report-canvas></report-canvas><side-pane filters>Filters</side-pane></div><page-tabs></page-tabs></div>
<side-pane>Quick measure</side-pane><side-pane>Visualizations</side-pane><side-pane>Data</side-pane></main>
<status-bar></status-bar><task-bar></task-bar>`);
</script>
</body>
</html>
